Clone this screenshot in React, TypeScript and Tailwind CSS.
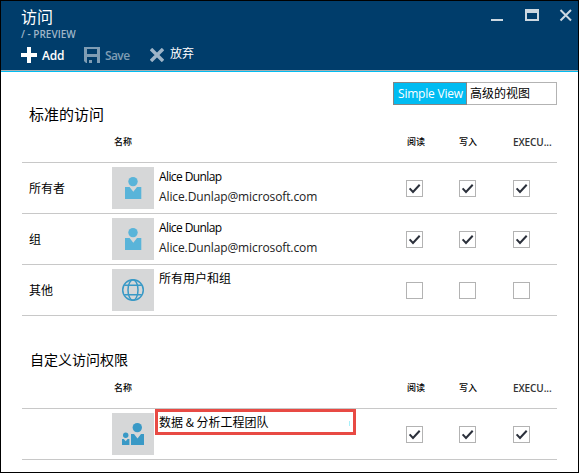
import React from "react";

const CJK = "font-['Noto_Sans_CJK_SC',sans-serif]";
const LATIN = "font-['Open_Sans','Noto_Sans_CJK_SC',sans-serif]";

function UserIcon() {
  return (
    <svg width="42" height="42" viewBox="0 0 42 42" fill="#59b4d9">
      <circle cx="21" cy="14.6" r="4.7" />
      <path d="M13 20h4.6l3.7 4.7 3.7-4.7h4.3v12H13z" />
    </svg>
  );
}

function GlobeIcon() {
  return (
    <svg width="42" height="42" viewBox="0 0 42 42" fill="none" stroke="#3999c6" strokeWidth="1.5">
      <circle cx="21" cy="21" r="10.3" />
      <ellipse cx="21" cy="21" rx="5" ry="10.3" />
      <path d="M12.2 16.2h17.6M12.2 25.8h17.6" />
    </svg>
  );
}

function GroupIcon() {
  return (
    <svg width="42" height="42" viewBox="0 0 42 42" fill="#3999c6">
      <circle cx="25.3" cy="14.6" r="4.7" />
      <path d="M19 21h3l3.5 4.5L29 21h3v11H19z" />
      <circle cx="13.7" cy="22.3" r="2.7" />
      <path d="M10 26h1.8l1.9 2.3 1.9-2.3h1.8v6H10z" />
    </svg>
  );
}

function Check({ on }: { on: boolean }) {
  return (
    <div className="h-[17px] w-[17px] border border-[#b3b3b3] bg-white">
      {on && (
        <svg width="15" height="15" viewBox="0 0 15 15" fill="none" stroke="#2b303b" strokeWidth="2">
          <path d="M2.6 7.4L6 11l6.7-7.3" />
        </svg>
      )}
    </div>
  );
}

function ColumnHeads() {
  return (
    <div className={`${CJK} grid h-[29px] grid-cols-[90px_294px_53px_54px_44px] border-b border-[#c8c8c8] pt-px text-[9px] leading-[14px] font-medium text-black`}>
      <span />
      <span className="pl-0.5">名称</span>
      <span className="pl-px">阅读</span>
      <span>写入</span>
      <span className="font-['Open_Sans',sans-serif] text-[10px] tracking-[-0.1px] font-semibold text-[#333]">EXECU...</span>
    </div>
  );
}

type RowProps = { label: string; icon: React.ReactNode; on: boolean; children: React.ReactNode };

function Row({ label, icon, on, children }: RowProps) {
  return (
    <div className="grid h-[51px] grid-cols-[90px_42px_252px_53px_54px_44px] border-b border-[#c8c8c8]">
      <span className={`${CJK} pt-4 pl-[7px] text-[12px] leading-[18px] text-black`}>{label}</span>
      <div className="mt-1 h-[42px] w-[42px] bg-[#d6d7d8]">{icon}</div>
      <div className="min-w-0">{children}</div>
      {[0, 1, 2].map((i) => (
        <div key={i} className="pt-[17px]"><Check on={on} /></div>
      ))}
    </div>
  );
}

function Person() {
  return (
    <div className="pt-[5px] pl-[5px] whitespace-nowrap">
      <div className="text-[12px] leading-[18px] tracking-[-0.6px] text-black">Alice Dunlap</div>
      <div className="pt-0.5 text-[12px] leading-[18px] tracking-[-0.11px] text-[#222]">Alice.Dunlap@microsoft.com</div>
    </div>
  );
}

export default function App() {
  return (
    <div className={`${LATIN} flex h-[473px] w-[579px] flex-col overflow-hidden border border-black bg-white`}>
      <header className="flex h-[71px] shrink-0 flex-col border-b border-[#00bcf2] bg-[#003d6b]">
        <div className="flex h-[69px] justify-between">
          <div className="pl-5 whitespace-nowrap">
            <div className={`${CJK} pt-[3px] text-[16px] leading-[24px] text-white`}>访问</div>
            <div className="pt-px text-[10px] leading-[10px] font-semibold text-[#9fb5c8]">/ - PREVIEW</div>
            <div className="flex h-[25px] items-center pt-[7px]">
              <svg width="16" height="16" viewBox="0 0 16 16" fill="#fff"><path d="M6 0h4v6h6v4h-6v6H6v-6H0V6h6z" /></svg>
              <span className="mt-0.5 ml-[5px] w-[42px] text-[12px] tracking-[-0.2px] font-semibold text-white">Add</span>
              <svg width="16" height="16" viewBox="0 0 16 16" fill="#7f9db4"><path fillRule="evenodd" d="M0 0h16v16h-3v-6H3v6H2l-2-2zM3 2v5h10V2zM5 13h3v3H5z" /></svg>
              <span className="mt-0.5 ml-[5px] w-[45px] text-[12px] tracking-[-0.6px] font-semibold text-[#7f9db4]">Save</span>
              <svg width="14" height="14" viewBox="0 0 14 14" stroke="#9fb5c8" strokeWidth="3.4"><path d="M1 1l12 12M13 1L1 13" /></svg>
              <span className={`${CJK} mb-1 ml-1.5 text-[12px] text-white`}>放弃</span>
            </div>
          </div>
          <svg width="87" height="30" viewBox="0 0 87 30" fill="none" stroke="#ccd8e1">
            <path d="M0 19h12" strokeWidth="2" />
            <path d="M34 8h14v12H34zm2 4v6h10v-6z" fill="#ccd8e1" fillRule="evenodd" stroke="none" />
            <path d="M69.5 9l10.5 10.5M80 9L69.5 19.5" strokeWidth="2" />
          </svg>
        </div>
        <div className="h-px bg-[#a6adb0]" />
      </header>

      <main className="flex flex-col pr-[21px] pl-[21px]">
        <div className="mt-[10px] flex h-[23px] w-[164px] shrink-0 self-end whitespace-nowrap">
          <div className="w-[74px] border border-[#858585] bg-[#00bcf2] pl-1 text-[12px] leading-[21px] tracking-[-0.2px] text-white">Simple View</div>
          <div className={`${CJK} w-[90px] border border-l-0 border-[#b3b3b3] pl-[3px] text-[12px] leading-[19px] text-black`}>高级的视图</div>
        </div>
        <h2 className={`${CJK} h-[29px] pl-[7px] text-[15px] leading-[18px] font-normal text-black`}>标准的访问</h2>
        <ColumnHeads />
        <Row label="所有者" on icon={<UserIcon />}><Person /></Row>
        <Row label="组" on icon={<UserIcon />}><Person /></Row>
        <Row label="其他" on={false} icon={<GlobeIcon />}>
          <div className={`${CJK} pt-1 pl-[5px] text-[12px] leading-[18px] text-black`}>所有用户和组</div>
        </Row>
        <h2 className={`${CJK} mt-[34px] h-[30px] pl-2 text-[14px] leading-[18px] font-normal text-black`}>自定义访问权限</h2>
        <ColumnHeads />
        <Row label="" on icon={<GroupIcon />}>
          <div className={`${CJK} ml-px flex h-[26px] w-[201px] justify-between border-3 border-[#e84a44] pr-[3px] pl-px text-[12px] leading-[19px] text-black`}>
            <span>数据 &amp; 分析工程团队</span>
            <i className="mt-[9px] h-[5px] w-px bg-[#a8f0fa]" />
          </div>
        </Row>
      </main>
    </div>
  );
}
